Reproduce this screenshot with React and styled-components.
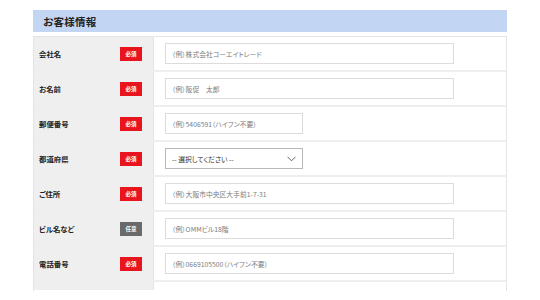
import React from "react";
import styled, { createGlobalStyle } from "styled-components";

const Global = createGlobalStyle`
  html, body { margin: 0; padding: 0; background: #fff; }
  body {
    font-family: "Noto Sans CJK JP", "Noto Sans", sans-serif;
    font-feature-settings: "palt";
    color: #222;
    overflow: hidden;
  }
`;

const Page = styled.div`
  width: 474px;
  margin: 10px 0 0 33px;
`;

const Heading = styled.h2`
  margin: 0;
  height: 22px;
  display: flex;
  align-items: center;
  padding-left: 10px;
  background: #c2d6f4;
  font-size: 10.5px;
  font-weight: 700;
  color: #222;
  letter-spacing: 0.3px;
`;

const Table = styled.div`
  margin-top: 4px;
  height: 254px;
  overflow: hidden;
  border: 1px solid #e4e4e4;
  border-bottom: none;
`;

const Row = styled.div`
  display: grid;
  grid-template-columns: 120px 1fr;
  height: 33px;
  border-bottom: 2px solid #eeeeee;
`;

const LabelCell = styled.div`
  background: #efefef;
  border-right: 1px solid #e2e2e2;
  display: flex;
  align-items: center;
  justify-content: space-between;
  padding: 0 11px 0 5px;
`;

const Label = styled.span`
  font-size: 7.4px;
  font-weight: 700;
  color: #222;
`;

const Badge = styled.span`
  width: 22px;
  height: 14px;
  display: flex;
  align-items: center;
  justify-content: center;
  background: ${(p) => (p.$optional ? "#6a6a6a" : "#e8141e")};
  color: #fff;
  font-size: 5.5px;
  font-weight: 700;
`;

const FieldCell = styled.div`
  display: flex;
  align-items: center;
  padding-left: 11px;
`;

const Input = styled.div`
  box-sizing: border-box;
  width: ${(p) => (p.$short ? "138px" : "289px")};
  height: 21px;
  border: 1px solid #dcdcdc;
  display: flex;
  align-items: center;
  padding-left: 6px;
  font-size: 6.8px;
  color: #7c7c7c;
  background: #fff;
`;

const Select = styled.div`
  box-sizing: border-box;
  width: 138px;
  height: 21px;
  border: 1px solid #b8b8b8;
  display: flex;
  align-items: center;
  justify-content: space-between;
  padding: 0 6px;
  font-size: 6.8px;
  color: #333;
  background: #fff;
`;

const Spacer = styled.div`
  display: grid;
  grid-template-columns: 120px 1fr;
  height: 8px;
`;

const SpacerLabel = styled.div`
  background: #efefef;
  border-right: 1px solid #e2e2e2;
`;

const rows = [
  { label: "会社名", ph: "（例）株式会社コーエイトレード" },
  { label: "お名前", ph: "（例）阪促　太郎" },
  { label: "郵便番号", ph: "（例）5406591（ハイフン不要）", short: true },
  { label: "都道府県", select: true },
  { label: "ご住所", ph: "（例）大阪市中央区大手前1-7-31" },
  { label: "ビル名など", ph: "（例）OMMビル18階", optional: true },
  { label: "電話番号", ph: "（例）0669105500（ハイフン不要）" },
];

export default function App() {
  return (
    <>
      <Global />
      <Page>
        <Heading>お客様情報</Heading>
        <Table>
          {rows.map((r) => (
            <Row key={r.label}>
              <LabelCell>
                <Label>{r.label}</Label>
                <Badge $optional={r.optional}>{r.optional ? "任意" : "必須"}</Badge>
              </LabelCell>
              <FieldCell>
                {r.select ? (
                  <Select>
                    <span>-- 選択してください --</span>
                    <svg width="9" height="6" viewBox="0 0 9 6">
                      <path d="M0.5 0.8 L4.5 4.8 L8.5 0.8" fill="none" stroke="#555" strokeWidth="0.9" />
                    </svg>
                  </Select>
                ) : (
                  <Input $short={r.short}>{r.ph}</Input>
                )}
              </FieldCell>
            </Row>
          ))}
          <Spacer>
            <SpacerLabel />
            <div />
          </Spacer>
        </Table>
      </Page>
    </>
  );
}
